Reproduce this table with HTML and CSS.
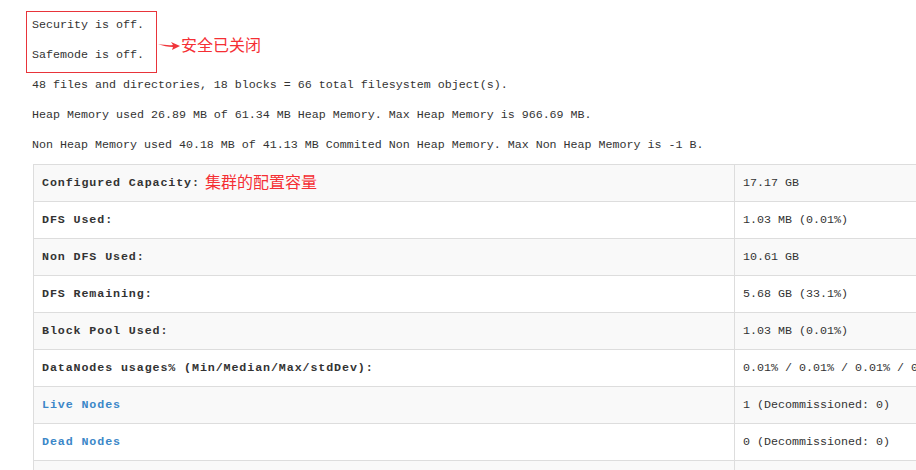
FILE: index.html
```html
<!DOCTYPE html>
<html>
<head>
<meta charset="utf-8">
<link rel="stylesheet" href="styles.css">
</head>
<body>
<div class="page">
  <div class="info">
    <p>Security is off.</p>
    <p>Safemode is off.</p>
    <p>48 files and directories, 18 blocks = 66 total filesystem object(s).</p>
    <p>Heap Memory used 26.89 MB of 61.34 MB Heap Memory. Max Heap Memory is 966.69 MB.</p>
    <p>Non Heap Memory used 40.18 MB of 41.13 MB Commited Non Heap Memory. Max Non Heap Memory is -1 B.</p>
    <div class="mark-box"></div>
    <svg class="mark-arrow" width="24" height="10" viewBox="0 0 24 10"><path d="M0 3 C6 4 11 4.5 15 4 L13 1 L22 5 L14 9 L15 6 C10 6 5 5 0 3 Z" fill="#f0353a"/></svg>
    <span class="mark-note note-security">安全已关闭</span>
  </div>
  <table class="summary">
    <tr><th><span class="cap-label">Configured Capacity:<span class="mark-note note-cap">集群的配置容量</span></span></th><td>17.17 GB</td></tr>
    <tr><th>DFS Used:</th><td>1.03 MB (0.01%)</td></tr>
    <tr><th>Non DFS Used:</th><td>10.61 GB</td></tr>
    <tr><th>DFS Remaining:</th><td>5.68 GB (33.1%)</td></tr>
    <tr><th>Block Pool Used:</th><td>1.03 MB (0.01%)</td></tr>
    <tr><th>DataNodes usages% (Min/Median/Max/stdDev):</th><td>0.01% / 0.01% / 0.01% / 0.00%</td></tr>
    <tr><th><a href="#">Live Nodes</a></th><td>1 (Decommissioned: 0)</td></tr>
    <tr><th><a href="#">Dead Nodes</a></th><td>0 (Decommissioned: 0)</td></tr>
    <tr><th><a href="#">Decommissioning Nodes</a></th><td>0</td></tr>
  </table>
</div>
</body>
</html>
```
FILE: styles.css
```css
html, body {
  margin: 0;
  padding: 0;
  background: #fff;
  overflow: hidden;
}
body {
  font-family: "Liberation Mono", "DejaVu Sans Mono", "Noto Sans CJK SC", monospace;
  font-size: 11.67px;
  color: #333;
}
.page {
  width: 1200px;
  padding-top: 15px;
}
.info {
  position: relative;
  padding-left: 32px;
}
.info p {
  margin: 0 0 10px;
  line-height: 20px;
  white-space: nowrap;
}
.info p:last-of-type {
  margin-bottom: 9px;
}
.mark-box {
  position: absolute;
  left: 26px;
  top: -4px;
  width: 129px;
  height: 60px;
  border: 1px solid #e8343a;
}
.mark-arrow {
  position: absolute;
  left: 158px;
  top: 26px;
}
.mark-note {
  font-family: "Noto Sans CJK SC", sans-serif;
  font-weight: normal;
  letter-spacing: 0;
  color: #f52f34;
  font-size: 16px;
  line-height: 20px;
}
.note-security {
  position: absolute;
  left: 181px;
  top: 19px;
}
.cap-label {
  position: relative;
}
.note-cap {
  position: absolute;
  left: 100%;
  top: -5px;
  margin-left: 5px;
  white-space: nowrap;
}
.summary {
  margin-left: 33px;
  border-collapse: collapse;
  width: 1100px;
  table-layout: fixed;
}
.summary tr:nth-child(odd) {
  background: #f9f9f9;
}
.summary th, .summary td {
  border: 1px solid #ddd;
  padding: 8px;
  height: 20px;
  line-height: 20px;
  text-align: left;
  white-space: nowrap;
  vertical-align: top;
}
.summary th {
  width: 684px;
  font-weight: bold;
  letter-spacing: 0.9px;
}
.summary td {
  font-weight: normal;
}
.summary a {
  color: #3b87c8;
  text-decoration: none;
}
```
